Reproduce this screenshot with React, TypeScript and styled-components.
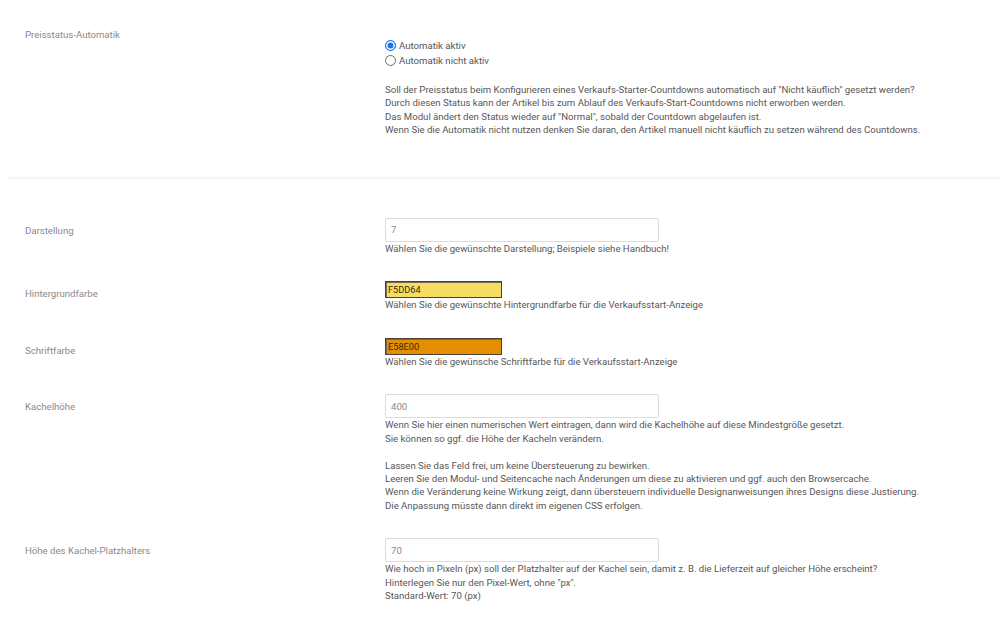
import React from "react";
import styled, { createGlobalStyle } from "styled-components";

const Global = createGlobalStyle`
  html, body { margin: 0; padding: 0; background: #ffffff; }
  body { font-family: Roboto, "Liberation Sans", Arial, sans-serif; }
  * { box-sizing: border-box; }
`;

const Page = styled.div`
  padding-left: 7px;
  width: 1000px;
`;

const Section = styled.section<{ $top: number; $bottom: number; $divider?: boolean }>`
  padding-top: ${(p) => p.$top}px;
  padding-bottom: ${(p) => p.$bottom}px;
  border-bottom: ${(p) => (p.$divider ? "2px solid #f5f5f5" : "none")};
  display: flex;
  flex-direction: column;
  gap: 26px;
`;

const Row = styled.div`
  display: grid;
  grid-template-columns: 360px 1fr;
  padding-left: 18px;
`;

const Label = styled.div<{ $pt: number }>`
  padding-top: ${(p) => p.$pt}px;
  font-size: 9.6px;
  line-height: 13.4px;
  color: #8a8a8a;
`;

const Value = styled.div<{ $pt?: number }>`
  padding-top: ${(p) => p.$pt ?? 0}px;
  display: flex;
  flex-direction: column;
  align-items: flex-start;
`;

const RadioLine = styled.label`
  display: flex;
  align-items: center;
  height: 15px;
  font-size: 9.6px;
  color: #555;
  gap: 3px;
`;

const Radio = styled.span<{ $checked?: boolean }>`
  width: 11px;
  height: 11px;
  border-radius: 50%;
  border: 1px solid ${(p) => (p.$checked ? "#1a73e8" : "#6b6b6b")};
  background: ${(p) => (p.$checked ? "#1a73e8" : "#fff")};
  box-shadow: ${(p) => (p.$checked ? "inset 0 0 0 1.6px #fff" : "none")};
  flex: none;
`;

const Help = styled.div<{ $mt?: number }>`
  margin-top: ${(p) => p.$mt ?? 0}px;
  font-size: 9.6px;
  line-height: 13.45px;
  color: #575757;
  white-space: pre-line;
`;

const TextInput = styled.div`
  width: 274px;
  height: 24px;
  border: 1px solid #dcdcdc;
  border-radius: 2px;
  padding-left: 5px;
  display: flex;
  align-items: center;
  font-size: 9.6px;
  color: #8a8a8a;
`;

const ColorInput = styled.div<{ $bg: string }>`
  width: 117px;
  height: 17px;
  background: ${(p) => p.$bg};
  border: 1px solid #4a4238;
  box-shadow: inset 1px 1px 0 #7a6a50;
  padding-left: 2px;
  display: flex;
  align-items: center;
  font-size: 9.2px;
  color: #3a2a10;
`;

export default function App() {
  return (
    <>
      <Global />
      <Page>
        <Section $top={28} $bottom={40} $divider>
          <Row>
            <Label $pt={0}>Preisstatus-Automatik</Label>
            <Value $pt={10}>
              <RadioLine>
                <Radio $checked />
                Automatik aktiv
              </RadioLine>
              <RadioLine>
                <Radio />
                Automatik nicht aktiv
              </RadioLine>
              <Help $mt={15}>
                {`Soll der Preisstatus beim Konfigurieren eines Verkaufs-Starter-Countdowns automatisch auf "Nicht käuflich" gesetzt werden?
Durch diesen Status kann der Artikel bis zum Ablauf des Verkaufs-Start-Countdowns nicht erworben werden.
Das Modul ändert den Status wieder auf "Normal", sobald der Countdown abgelaufen ist.
Wenn Sie die Automatik nicht nutzen denken Sie daran, den Artikel manuell nicht käuflich zu setzen während des Countdowns.`}
              </Help>
            </Value>
          </Row>
        </Section>
        <Section $top={39} $bottom={20}>
          <Row>
            <Label $pt={6}>Darstellung</Label>
            <Value>
              <TextInput>7</TextInput>
              <Help>Wählen Sie die gewünschte Darstellung; Beispiele siehe Handbuch!</Help>
            </Value>
          </Row>
          <Row>
            <Label $pt={6}>Hintergrundfarbe</Label>
            <Value>
              <ColorInput $bg="#F5DD64">F5DD64</ColorInput>
              <Help>Wählen Sie die gewünschte Hintergrundfarbe für die Verkaufsstart-Anzeige</Help>
            </Value>
          </Row>
          <Row>
            <Label $pt={6}>Schriftfarbe</Label>
            <Value>
              <ColorInput $bg="#E58E00">E58E00</ColorInput>
              <Help>Wählen Sie die gewünsche Schriftfarbe für die Verkaufsstart-Anzeige</Help>
            </Value>
          </Row>
          <Row>
            <Label $pt={6}>Kachelhöhe</Label>
            <Value>
              <TextInput>400</TextInput>
              <Help>
                {`Wenn Sie hier einen numerischen Wert eintragen, dann wird die Kachelhöhe auf diese Mindestgröße gesetzt.
Sie können so ggf. die Höhe der Kacheln verändern.

Lassen Sie das Feld frei, um keine Übersteuerung zu bewirken.
Leeren Sie den Modul- und Seitencache nach Änderungen um diese zu aktivieren und ggf. auch den Browsercache.
Wenn die Veränderung keine Wirkung zeigt, dann übersteuern individuelle Designanweisungen ihres Designs diese Justierung.
Die Anpassung müsste dann direkt im eigenen CSS erfolgen.`}
              </Help>
            </Value>
          </Row>
          <Row>
            <Label $pt={6}>Höhe des Kachel-Platzhalters</Label>
            <Value>
              <TextInput>70</TextInput>
              <Help>
                {`Wie hoch in Pixeln (px) soll der Platzhalter auf der Kachel sein, damit z. B. die Lieferzeit auf gleicher Höhe erscheint?
Hinterlegen Sie nur den Pixel-Wert, ohne "px".
Standard-Wert: 70 (px)`}
              </Help>
            </Value>
          </Row>
        </Section>
      </Page>
    </>
  );
}
